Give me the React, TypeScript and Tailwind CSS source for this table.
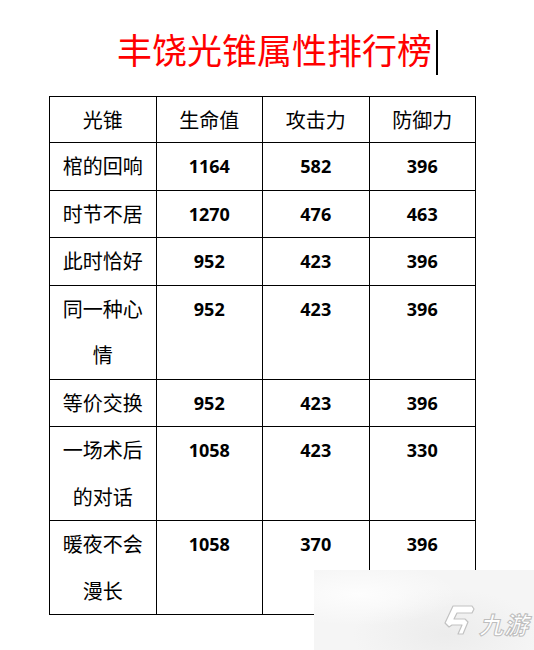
import React from 'react';

interface Row {
  name: string;
  hp: number;
  atk: number;
  def: number;
}

const rows: Row[] = [
  { name: '棺的回响', hp: 1164, atk: 582, def: 396 },
  { name: '时节不居', hp: 1270, atk: 476, def: 463 },
  { name: '此时恰好', hp: 952, atk: 423, def: 396 },
  { name: '同一种心情', hp: 952, atk: 423, def: 396 },
  { name: '等价交换', hp: 952, atk: 423, def: 396 },
  { name: '一场术后的对话', hp: 1058, atk: 423, def: 330 },
  { name: '暖夜不会漫长', hp: 1058, atk: 370, def: 396 },
];

const cjk = "font-['Noto_Sans_CJK_SC',sans-serif]";
const num = "font-['Open_Sans',sans-serif] font-bold text-[18px]";

export default function App() {
  return (
    <div className="relative w-[534px] h-[650px] bg-white overflow-hidden">
      {/* Title */}
      <div className="h-[96px] pt-[30px] pl-[117px] flex items-start">
        <span className={`${cjk} text-[35px] leading-[45px] text-[#ff0000] -mt-[4px]`}>丰饶光锥属性排行榜</span>
        <span className="inline-block w-[2px] h-[45px] bg-black ml-[4px]" />
      </div>

      {/* Table */}
      <table className="ml-[49px] w-[427px] table-fixed border-collapse text-black">
        <thead>
          <tr>
            {['光锥', '生命值', '攻击力', '防御力'].map(h => (
              <th
                key={h}
                className={`${cjk} border border-black text-[20px] font-normal leading-[45px] text-center align-top`}
              >
                {h}
              </th>
            ))}
          </tr>
        </thead>
        <tbody>
          {rows.map(r => (
            <tr key={r.name}>
              <td className={`${cjk} border border-black px-[12px] text-[20px] leading-[46.5px] text-center align-top`}>
                {r.name}
              </td>
              <td className={`${num} border border-black leading-[46.5px] text-center align-top`}>{r.hp}</td>
              <td className={`${num} border border-black leading-[46.5px] text-center align-top`}>{r.atk}</td>
              <td className={`${num} border border-black leading-[46.5px] text-center align-top`}>{r.def}</td>
            </tr>
          ))}
        </tbody>
      </table>

      {/* Watermark */}
      <div className="absolute left-[314px] top-[570px] w-[220px] h-[80px] bg-[#f5f5f5]">
        <div className="absolute inset-0 bg-[radial-gradient(ellipse_at_20%_30%,#fdfdfd_0%,transparent_40%),radial-gradient(ellipse_at_60%_80%,#ececec_0%,transparent_50%)]" />
        <svg className="absolute left-[130px] top-[35px]" width="32" height="30" viewBox="0 0 32 30" fill="white" stroke="#c2c2c2" strokeWidth="1.2" strokeLinejoin="round">
          <path d="M9 1 H28 L30 4 L28 8 H13 L10 14 H21 L24 17 L19 29 H14 L18 20 H8 L5 22 L1 18 Z" />
        </svg>
        <span className="absolute left-[165px] top-[41px] font-['Noto_Sans_CJK_SC',sans-serif] font-bold italic text-[24px] leading-[26px] text-white [-webkit-text-stroke:1px_#bdbdbd] tracking-[1px]">
          九游
        </span>
      </div>
    </div>
  );
}
